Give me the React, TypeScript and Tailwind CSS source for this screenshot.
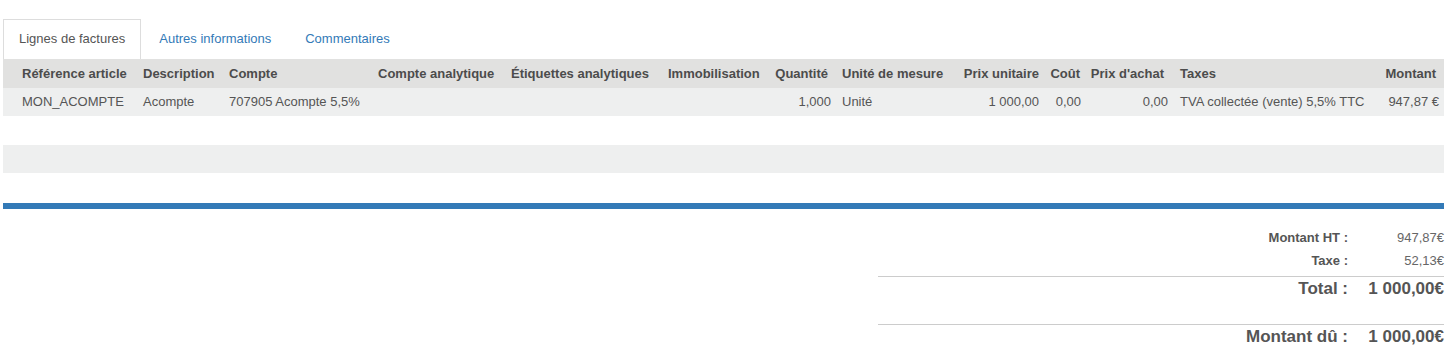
import React from 'react';

type Col = {
    label: string;
    width: number;
    align: 'left' | 'right';
    head: string;
    cell: string;
};

const COLS: Col[] = [
    { label: 'Référence article', width: 132, align: 'left', head: 'pl-[19px]', cell: 'pl-[19px]' },
    { label: 'Description', width: 86, align: 'left', head: 'pl-2', cell: 'pl-2' },
    { label: 'Compte', width: 149, align: 'left', head: 'pl-2', cell: 'pl-2' },
    { label: 'Compte analytique', width: 133, align: 'left', head: 'pl-2', cell: 'pl-2' },
    { label: 'Étiquettes analytiques', width: 157, align: 'left', head: 'pl-2', cell: 'pl-2' },
    { label: 'Immobilisation', width: 107, align: 'left', head: 'pl-2', cell: 'pl-2' },
    { label: 'Quantité', width: 67, align: 'right', head: 'pr-[6px]', cell: 'pr-[3px]' },
    { label: 'Unité de mesure', width: 118, align: 'left', head: 'pl-2', cell: 'pl-2' },
    { label: 'Prix unitaire', width: 93, align: 'right', head: 'pr-[6px]', cell: 'pr-[6px]' },
    { label: 'Coût', width: 41, align: 'right', head: 'pr-[6px]', cell: 'pr-[5px]' },
    { label: "Prix d'achat", width: 86, align: 'right', head: 'pr-[8px]', cell: 'pr-[4px]' },
    { label: 'Taxes', width: 205, align: 'left', head: 'pl-2', cell: 'pl-2' },
    { label: 'Montant', width: 67, align: 'right', head: 'pr-[8px]', cell: 'pr-[5px]' },
];

const LINE = [
    'MON_ACOMPTE',
    'Acompte',
    '707905 Acompte 5,5%',
    '',
    '',
    '',
    '1,000',
    'Unité',
    '1 000,00',
    '0,00',
    '0,00',
    'TVA collectée (vente) 5,5% TTC',
    '947,87 €',
];

const TABS = ['Lignes de factures', 'Autres informations', 'Commentaires'];

function Tabs() {
    return (
        <ul className="flex items-end">
            {TABS.map((t, i) => (
                <li key={t} className="mr-[2px]">
                    {i === 0 ? (
                        <span className="block h-[40px] border border-b-0 border-[#dddddd] bg-white px-[15px] pt-[10px] text-[13px] leading-[18px] text-[#555555]">
                            {t}
                        </span>
                    ) : (
                        <span className="block h-[40px] border border-transparent px-[15px] pt-[10px] text-[13px] leading-[18px] text-[#337ab7]">
                            {t}
                        </span>
                    )}
                </li>
            ))}
        </ul>
    );
}

function TotalRow({ label, value, big }: { label: string; value: string; big?: boolean }) {
    return (
        <div className="flex h-[23px] items-center justify-end">
            <span
                className={`pr-[1px] text-right font-bold text-[#555555] ${big ? 'text-[17px]' : 'text-[13px]'}`}
            >
                {label}
            </span>
            <span
                className={`w-[95px] text-right ${
                    big ? 'text-[17px] font-bold text-[#555555]' : 'text-[13px] text-[#666666]'
                }`}
            >
                {value}
            </span>
        </div>
    );
}

export default function App() {
    return (
        <div className="min-h-[351px] bg-white pl-[3px] pr-[10px] pt-[19px] font-['Liberation_Sans',Arial,sans-serif]">
            <Tabs />

            <table className="w-[1441px] table-fixed border-collapse text-[13px]">
                <colgroup>
                    {COLS.map((c) => (
                        <col key={c.label} style={{ width: c.width }} />
                    ))}
                </colgroup>
                <thead>
                    <tr className="h-[29px] bg-[#e1e1e0]">
                        {COLS.map((c) => (
                            <th
                                key={c.label}
                                className={`whitespace-nowrap p-0 font-bold text-[#4c4c4c] ${
                                    c.align === 'right' ? 'text-right' : 'text-left'
                                } ${c.head}`}
                            >
                                {c.label}
                            </th>
                        ))}
                    </tr>
                </thead>
                <tbody>
                    <tr className="h-[28px] bg-[#eeefef]">
                        {LINE.map((v, i) => (
                            <td
                                key={i}
                                className={`whitespace-nowrap p-0 text-[#555555] ${
                                    COLS[i].align === 'right' ? 'text-right' : 'text-left'
                                } ${COLS[i].cell}`}
                            >
                                {v}
                            </td>
                        ))}
                    </tr>
                    {/* filler rows, striped like the list view */}
                    <tr className="h-[29px] bg-white">
                        <td colSpan={13} />
                    </tr>
                    <tr className="h-[28px] bg-[#eeefef]">
                        <td colSpan={13} />
                    </tr>
                    <tr className="h-[30px] bg-white">
                        <td colSpan={13} />
                    </tr>
                </tbody>
            </table>
            <div className="h-[6px] w-[1441px] bg-[#337ab7]" />

            <div className="ml-auto mt-[17px] w-[566px]">
                <TotalRow label="Montant HT :" value="947,87€" />
                <TotalRow label="Taxe :" value="52,13€" />
                <div className="mt-[4px] border-t border-[#cccccc]">
                    <TotalRow label="Total :" value="1 000,00€" big />
                </div>
                <div className="mt-[24px] border-t border-[#cccccc]">
                    <TotalRow label="Montant dû :" value="1 000,00€" big />
                </div>
            </div>
        </div>
    );
}
